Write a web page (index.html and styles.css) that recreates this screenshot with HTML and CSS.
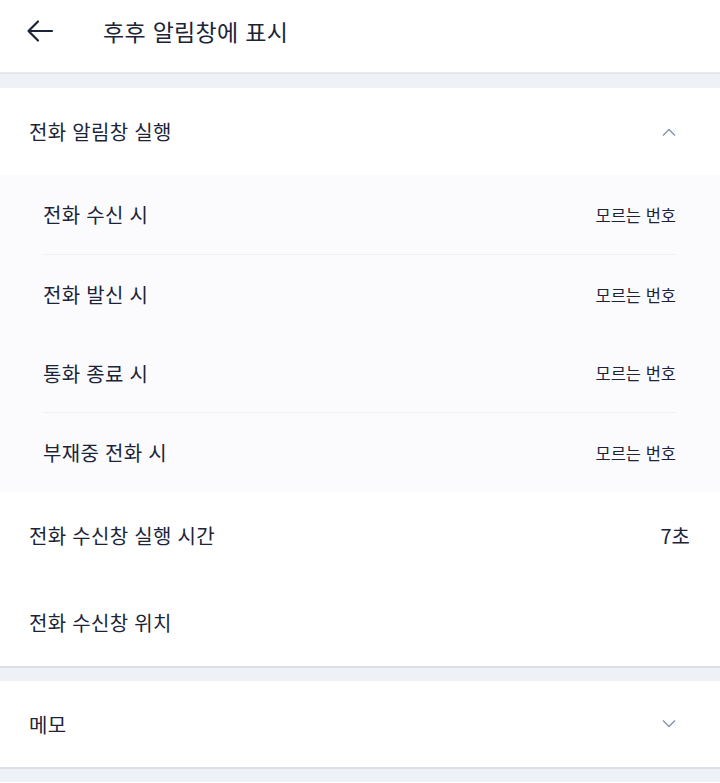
FILE: index.html
```html
<!DOCTYPE html>
<html lang="ko">
<head>
<meta charset="utf-8">
<link rel="stylesheet" href="styles.css">
</head>
<body>
<header class="appbar">
  <svg class="back" width="28" height="24" viewBox="0 0 28 24" fill="none" stroke="#1c2438" stroke-width="2.2" stroke-linecap="round" stroke-linejoin="round">
    <path d="M26 12H2.5M12 2.5L2.5 12L12 21.5"/>
  </svg>
  <h1 class="title">후후 알림창에 표시</h1>
</header>
<div class="band"></div>
<section class="card">
  <div class="row head">
    <span class="label">전화 알림창 실행</span>
    <svg class="chev" width="14" height="8" viewBox="0 0 14 8" fill="none" stroke="#8a97aa" stroke-width="1.5"><path d="M1 7.5L7 1.5L13 7.5"/></svg>
  </div>
  <div class="sublist">
    <div class="subrow first divided"><span class="sublabel">전화 수신 시</span><span class="value">모르는 번호</span></div>
    <div class="subrow"><span class="sublabel">전화 발신 시</span><span class="value">모르는 번호</span></div>
    <div class="subrow divided"><span class="sublabel">통화 종료 시</span><span class="value">모르는 번호</span></div>
    <div class="subrow"><span class="sublabel">부재중 전화 시</span><span class="value">모르는 번호</span></div>
  </div>
  <div class="row plain"><span class="label">전화 수신창 실행 시간</span><span class="big">7초</span></div>
  <div class="row plain"><span class="label">전화 수신창 위치</span></div>
</section>
<div class="band thick"></div>
<section class="card">
  <div class="row head memo">
    <span class="label">메모</span>
    <svg class="chev" width="14" height="8" viewBox="0 0 14 8" fill="none" stroke="#8a97aa" stroke-width="1.5"><path d="M1 0.5L7 6.5L13 0.5"/></svg>
  </div>
</section>
<div class="band thick"></div>
</body>
</html>
```
FILE: styles.css
```css
* { box-sizing: border-box; margin: 0; padding: 0; }
html, body { background: #ffffff; }
body {
  font-family: "Noto Sans CJK KR", "Noto Sans", sans-serif;
  color: #1c2438;
  width: 720px;
}
.appbar {
  height: 73px;
  display: flex;
  align-items: center;
  padding-left: 26px;
  border-bottom: 1px solid #e9eaec;
}
.back { flex: none; margin-top: -10px; }
.title {
  font-size: 23px;
  font-weight: 400;
  margin-left: 49px;
  margin-top: -11px;
  letter-spacing: 0.3px;
}
.band {
  height: 15px;
  background: #eef1f6;
  border-top: 1px solid #dfe3ec;
}
.band.thick { border-top: 2px solid #d9dee7; height: 15px; }
.card { background: #ffffff; }
.row {
  display: flex;
  align-items: center;
  justify-content: space-between;
  padding: 0 30px 0 29px;
}
.row.head { height: 87px; padding-right: 44px; }
.row.plain { height: 87px; }
.row.memo { height: 86px; }
.label { font-size: 20px; letter-spacing: 0.3px; }
.big { font-size: 20px; }
.sublist {
  background: #fbfbfe;
  padding: 0 44px 0 43px;
}
.subrow {
  height: 79px;
  display: flex;
  align-items: center;
  justify-content: space-between;
}
.subrow.first { height: 80px; }
.subrow.divided { border-bottom: 1px solid #eef0f4; }
.sublabel { font-size: 20px; letter-spacing: 0.3px; }
.value { font-size: 16.5px; }
.chev { flex: none; }
```
